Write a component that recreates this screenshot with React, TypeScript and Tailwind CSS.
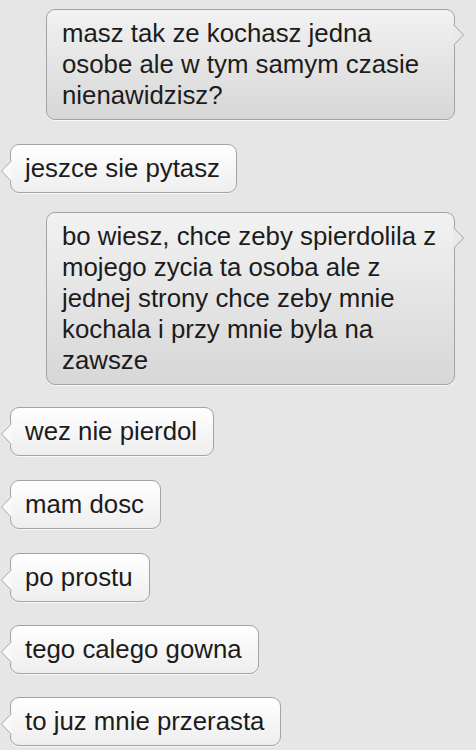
const font = "font-['Liberation_Sans',Arial,sans-serif]"

type Msg = { text: string; mine: boolean; mt: string }

const messages: Msg[] = [
    { text: 'masz tak ze kochasz jedna osobe ale w tym samym czasie nienawidzisz?', mine: true, mt: 'mt-[9px]' },
    { text: 'jeszce sie pytasz', mine: false, mt: 'mt-[24px]' },
    { text: 'bo wiesz, chce zeby spierdolila z mojego zycia ta osoba ale z jednej strony chce zeby mnie kochala i przy mnie byla na zawsze', mine: true, mt: 'mt-[19px]' },
    { text: 'wez nie pierdol', mine: false, mt: 'mt-[22px]' },
    { text: 'mam dosc', mine: false, mt: 'mt-[24px]' },
    { text: 'po prostu', mine: false, mt: 'mt-[24px]' },
    { text: 'tego calego gowna', mine: false, mt: 'mt-[23px]' },
    { text: 'to juz mnie przerasta', mine: false, mt: 'mt-[23px]' },
]

function Tail({ mine }: { mine: boolean }) {
    // small chevron that sticks out of the bubble side
    if (mine) {
        return (
            <svg width="12" height="22" viewBox="0 0 12 22" className="absolute top-[14px] -right-[11px]">
                <path d="M0 0 L1 0 L11 11 L1 22 L0 22 Z" fill="#e9e9e9" />
                <path d="M0.5 0.5 L10.5 11 L0.5 21.5" fill="none" stroke="#a3a3a3" strokeWidth="1" />
            </svg>
        )
    }
    return (
        <svg width="12" height="22" viewBox="0 0 12 22" className="absolute top-[15px] -left-[11px]">
            <path d="M12 0 L11 0 L1 11 L11 22 L12 22 Z" fill="#f9f9f9" />
            <path d="M11.5 0.5 L1.5 11 L11.5 21.5" fill="none" stroke="#a3a3a3" strokeWidth="1" />
        </svg>
    )
}

function Bubble({ msg }: { msg: Msg }) {
    return (
        <div
            className={
                msg.mine
                    ? `relative ${msg.mt} self-end mr-[21px] w-[409px] rounded-[9px] border border-[#a3a3a3] bg-gradient-to-b from-[#f2f2f2] to-[#d7d7d7] pl-[15px] pr-[14px] py-2 shadow-[0_1px_0_rgba(255,255,255,0.7)]`
                    : `relative ${msg.mt} self-start ml-[10px] rounded-[9px] border border-[#a3a3a3] bg-gradient-to-b from-[#ffffff] to-[#eeeeee] pl-[14px] pr-[16px] py-2 shadow-[0_1px_0_rgba(255,255,255,0.7)]`
            }
        >
            <Tail mine={msg.mine} />
            <p className="relative text-[25.8px] leading-[31px] text-[#1c1c1c]">{msg.text}</p>
        </div>
    )
}

export default function App() {
    return (
        <div className={`${font} w-[476px] h-[750px] overflow-hidden bg-[#e6e6e6] flex flex-col`}>
            {messages.map((m, i) => (
                <Bubble key={i} msg={m} />
            ))}
        </div>
    )
}
